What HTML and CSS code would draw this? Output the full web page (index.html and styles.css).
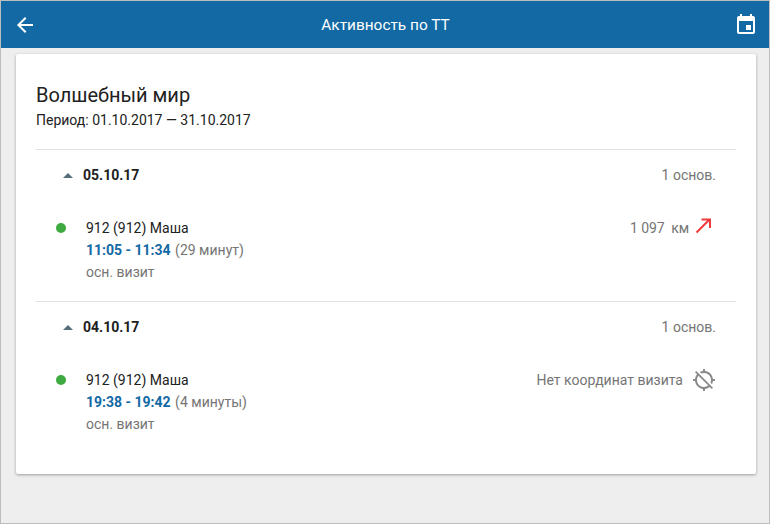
FILE: index.html
```html
<!DOCTYPE html>
<html lang="ru">

<head>
    <meta charset="UTF-8">
    <meta name="viewport" content="width=device-width, initial-scale=1.0">
    <title>Активность по ТТ</title>
    <link rel="stylesheet" href="styles.css">
</head>

<body>
    <div class="window">
        <header class="toolbar">
            <svg class="icon" viewBox="0 0 24 24"><path d="M20 11H7.83l5.59-5.59L12 4l-8 8 8 8 1.41-1.41L7.83 13H20v-2z"/></svg>
            <div class="toolbar-title">Активность по ТТ</div>
            <svg class="icon" viewBox="0 0 24 24"><path d="M17 12h-5v5h5v-5zM16 1v2H8V1H6v2H5c-1.11 0-1.99.9-1.99 2L3 19c0 1.1.89 2 2 2h14c1.1 0 2-.9 2-2V5c0-1.1-.9-2-2-2h-1V1h-2zm3 18H5V8h14v11z"/></svg>
        </header>

        <main class="card">
            <h1>Волшебный мир</h1>
            <div class="period">Период: 01.10.2017 — 31.10.2017</div>

            <section class="day">
                <div class="day-head">
                    <span class="arrow"></span>
                    <span class="day-date">05.10.17</span>
                    <span class="day-count">1 основ.</span>
                </div>
                <div class="visit">
                    <span class="dot"></span>
                    <div class="visit-info">
                        <div class="visit-name">912 (912) Маша</div>
                        <div class="visit-time"><b>11:05 - 11:34</b> <span>(29 минут)</span></div>
                        <div class="visit-type">осн. визит</div>
                    </div>
                    <div class="visit-geo">
                        <span class="distance">1 097 &nbsp;км</span>
                        <svg class="geo-arrow" viewBox="0 0 18 18"><path d="M2.5 15.5 15 3M7.5 2.5H16V11"/></svg>
                    </div>
                </div>
            </section>

            <section class="day">
                <div class="day-head">
                    <span class="arrow"></span>
                    <span class="day-date">04.10.17</span>
                    <span class="day-count">1 основ.</span>
                </div>
                <div class="visit">
                    <span class="dot"></span>
                    <div class="visit-info">
                        <div class="visit-name">912 (912) Маша</div>
                        <div class="visit-time"><b>19:38 - 19:42</b> <span>(4 минуты)</span></div>
                        <div class="visit-type">осн. визит</div>
                    </div>
                    <div class="visit-geo">
                        <span>Нет координат визита</span>
                        <svg class="geo-off" viewBox="0 0 24 24"><path d="M20.94 11c-.46-4.17-3.77-7.48-7.94-7.94V1h-2v2.06c-1.13.12-2.19.46-3.16.97l1.5 1.5C10.16 5.19 11.06 5 12 5c3.87 0 7 3.13 7 7 0 .94-.19 1.84-.52 2.65l1.5 1.5c.5-.96.84-2.02.97-3.15H23v-2h-2.06zM3 4.27l2.04 2.04C3.97 7.62 3.25 9.23 3.06 11H1v2h2.06c.46 4.17 3.77 7.48 7.94 7.94V23h2v-2.06c1.77-.2 3.38-.91 4.69-1.98L19.73 21 21 19.73 4.27 3 3 4.27zm13.27 13.27C15.09 18.45 13.61 19 12 19c-3.87 0-7-3.13-7-7 0-1.61.55-3.09 1.46-4.27l9.81 9.81z"/></svg>
                    </div>
                </div>
            </section>
        </main>
    </div>
</body>

</html>
```

FILE: styles.css
```css
html,
body {
    height: 100%;
}

body {
    margin: 0;
    font-family: Roboto, sans-serif;
    font-size: 14px;
    color: #212121;
}

.window {
    box-sizing: border-box;
    height: 100%;
    border: 1px solid #bdbdbd;
    background-color: #eeeeee;
}

.toolbar {
    display: flex;
    align-items: center;
    height: 47px;
    padding: 0 11px 0 12px;
    background-color: #1269a4;
    color: #fff;
}

.toolbar .icon {
    width: 24px;
    height: 24px;
    fill: #fff;
}

.toolbar-title {
    flex: 1;
    text-align: center;
    font-size: 15.4px;
    font-weight: 400;
}

.card {
    box-sizing: border-box;
    height: 420px;
    margin: 6px 13px 0 15px;
    padding: 29px 20px 0;
    background-color: #fff;
    border-radius: 2px;
    box-shadow: 0 1px 3px rgba(0, 0, 0, 0.35);
}

h1 {
    margin: 0;
    font-size: 20px;
    font-weight: 400;
    line-height: 24px;
    color: #212121;
}

.period {
    margin-top: 3px;
    margin-bottom: 19px;
    line-height: 20px;
    color: #212121;
}

.day {
    box-sizing: border-box;
    height: 152px;
    border-top: 1px solid #e0e0e0;
}

.day-head {
    display: flex;
    align-items: center;
    height: 50px;
    padding: 0 20px 0 27px;
}

.arrow {
    width: 0;
    height: 0;
    margin-right: 10px;
    border-left: 5px solid transparent;
    border-right: 5px solid transparent;
    border-bottom: 5px solid #546e7a;
}

.day-date {
    flex: 1;
    font-weight: 700;
}

.day-count {
    color: #757575;
}

.visit {
    display: flex;
    align-items: flex-start;
    margin-top: 17px;
    padding: 0 20px;
}

.dot {
    flex: none;
    width: 10px;
    height: 10px;
    margin-top: 6px;
    margin-right: 20px;
    border-radius: 50%;
    background-color: #3dab40;
}

.visit-info {
    flex: 1;
}

.visit-name {
    line-height: 22px;
}

.visit-time {
    line-height: 22px;
    color: #757575;
}

.visit-time b {
    margin-right: 1px;
    font-weight: 700;
    color: #1269a4;
}

.visit-type {
    line-height: 22px;
    color: #757575;
}

.visit-geo {
    display: flex;
    align-items: center;
    height: 22px;
    color: #757575;
}

.distance {
    letter-spacing: -0.1px;
}

.geo-arrow {
    width: 18px;
    height: 18px;
    margin-left: 5px;
    margin-right: 4px;
    margin-bottom: 4px;
    fill: none;
    stroke: #ef3b3b;
    stroke-width: 2;
}

.geo-off {
    width: 24px;
    height: 24px;
    margin-left: 9px;
    fill: #8a8a8a;
}
```
